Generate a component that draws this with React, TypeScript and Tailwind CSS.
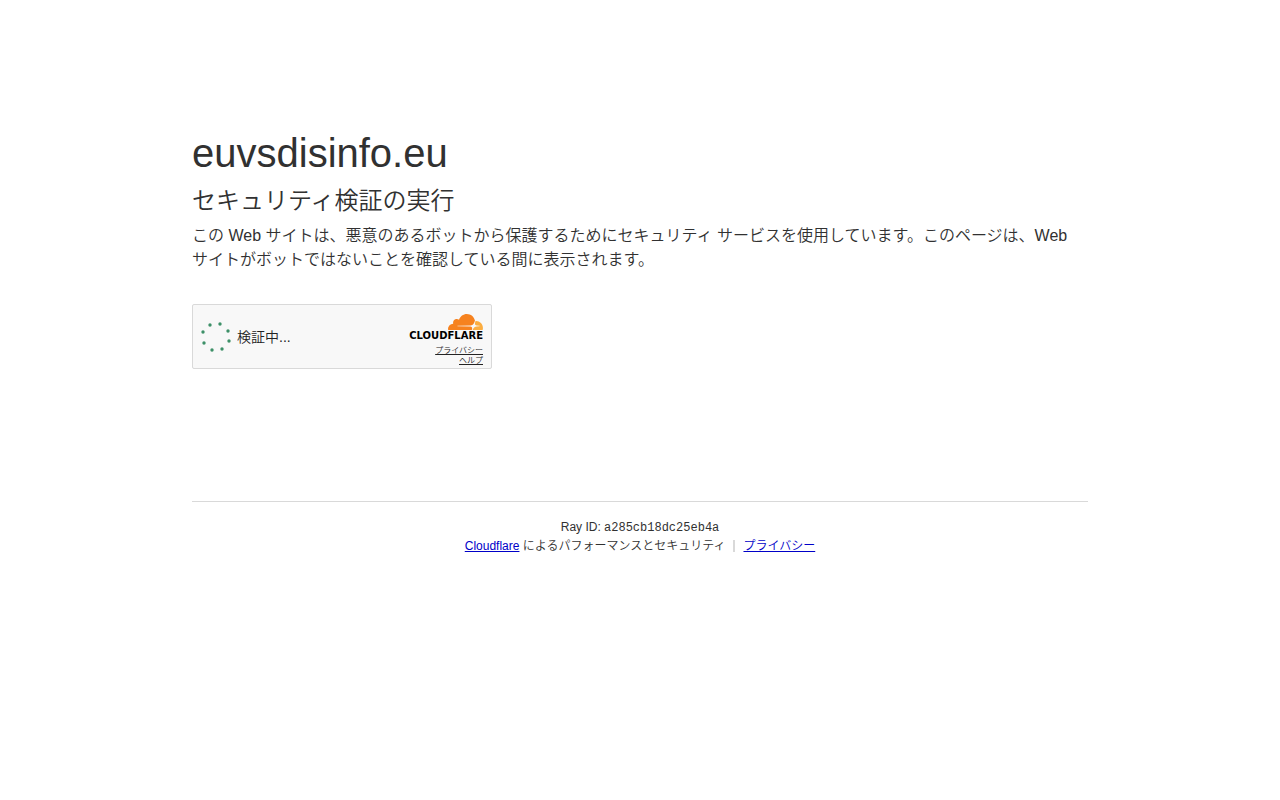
import React from "react";

// x/y of each spinner dot inside a 30x30 box
const DOTS = [
    [9, 3],
    [19, 2],
    [27, 9],
    [28, 19],
    [21, 27],
    [11, 28],
    [3, 21],
    [2, 10],
];

const Spinner = () => {
    return (
        <svg className="w-[30px] h-[30px] shrink-0" viewBox="0 0 30 30" aria-hidden="true">
            {DOTS.map(([x, y]) => (
                <circle key={`${x}-${y}`} cx={x} cy={y} r="1.7" fill="#3d9068" />
            ))}
        </svg>
    );
};

const CloudflareLogo = () => {
    return (
        <div className="flex flex-col items-end">
            <svg className="w-[35px] h-4" viewBox="38 0 35 16" aria-hidden="true">
                <path
                    fill="#F6821F"
                    d="M61.8848 15.7841L62.0632 15.1578C62.2758 14.4126 62.1967 13.7239 61.8401 13.2178C61.5118 12.7517 60.9649 12.4773 60.3007 12.4453L47.7201 12.2836C47.6811 12.2829 47.6428 12.2728 47.6083 12.2542C47.5738 12.2356 47.5442 12.209 47.5217 12.1766C47.4996 12.1431 47.4856 12.1049 47.4807 12.0649C47.4758 12.025 47.4801 11.9844 47.4933 11.9465C47.5149 11.8839 47.5541 11.8291 47.6061 11.7888C47.658 11.7486 47.7204 11.7247 47.7856 11.72L60.4827 11.5566C61.9889 11.4864 63.6196 10.2462 64.1905 8.73372L64.9146 6.81361C64.9443 6.73242 64.951 6.64444 64.9341 6.55957C64.112 2.80652 60.8115 0 56.8652 0C53.2293 0 50.1421 2.38158 49.0347 5.69186C48.2864 5.12186 47.3535 4.85982 46.4228 4.95823C44.6785 5.13401 43.276 6.55928 43.1034 8.32979C43.059 8.77189 43.0915 9.21845 43.1992 9.64918C40.3497 9.73347 38.0645 12.1027 38.0645 15.0151C38.0649 15.2751 38.0838 15.5347 38.1212 15.7919C38.1294 15.8513 38.1584 15.9057 38.2029 15.9452C38.2474 15.9848 38.3044 16.0067 38.3635 16.0071L61.5894 16.0099C61.6616 16.0088 61.7252 15.9862 61.7772 15.9455C61.8293 15.9049 61.867 15.8483 61.8848 15.7841Z"
                />
                <path
                    fill="#FBAD41"
                    d="M66.0758 6.95285C65.9592 6.95285 65.843 6.95582 65.7274 6.96177C65.7087 6.96312 65.6904 6.96719 65.6729 6.97385C65.6426 6.98437 65.6152 7.00219 65.5931 7.02579C65.5711 7.04939 65.555 7.07806 65.5462 7.10936L65.0515 8.84333C64.8389 9.58847 64.918 10.2766 65.2749 10.7827C65.6029 11.2494 66.1498 11.5233 66.814 11.5552L69.4959 11.7186C69.5336 11.7199 69.5705 11.73 69.6037 11.7483C69.6369 11.7666 69.6654 11.7925 69.687 11.8239C69.7092 11.8576 69.7234 11.896 69.7283 11.9363C69.7332 11.9765 69.7288 12.0173 69.7153 12.0555C69.6937 12.118 69.6546 12.1727 69.6028 12.2129C69.5509 12.2531 69.4887 12.2771 69.4236 12.2819L66.6371 12.4453C65.1241 12.5161 63.4937 13.7558 62.9233 15.2682L62.722 15.8022C62.7136 15.8245 62.7105 15.8486 62.713 15.8724C62.7155 15.8961 62.7236 15.9189 62.7365 15.9389C62.7494 15.9589 62.7668 15.9755 62.7871 15.9874C62.8074 15.9992 62.8302 16.006 62.8535 16.0072H72.4475C72.5029 16.0076 72.5569 15.9896 72.6012 15.9558C72.6455 15.9221 72.6778 15.8745 72.6929 15.8204C72.8617 15.2118 72.947 14.5823 72.9463 13.95C72.9459 10.0851 69.8684 6.95285 66.0758 6.95285Z"
                />
            </svg>
            <span className="font-['DejaVu_Sans',sans-serif] font-bold text-[10px] leading-3 text-black">CLOUDFLARE</span>
        </div>
    );
};

const Widget = () => {
    return (
        <div className="mt-8 flex w-full max-w-[300px] h-[65px] items-center justify-between rounded-xs border border-[#d9d9d9] bg-[#f8f8f8] px-2">
            <div className="flex items-center gap-[6px] text-sm text-[#232323]" role="status">
                <Spinner />
                <span>検証中...</span>
            </div>
            <div className="flex flex-col items-end pt-[6px]">
                <CloudflareLogo />
                <div className="mt-1 flex flex-col items-end text-[8px] leading-[10px] text-[#232323]">
                    <a href="#privacy" className="underline">プライバシー</a>
                    <a href="#help" className="underline">ヘルプ</a>
                </div>
            </div>
        </div>
    );
};

export default function App() {
    return (
        <div className="min-h-screen bg-white font-['Liberation_Sans','Noto_Sans_CJK_JP',sans-serif] font-[350] text-[#313131]" lang="ja">
            <main className="mx-auto w-full max-w-[960px] px-8 pt-32">
                <h1 className="text-[40px] leading-[50px]">euvsdisinfo.eu</h1>
                <h2 className="mt-1 text-2xl leading-[38px]">セキュリティ検証の実行</h2>
                <p className="mt-1 text-base leading-6">
                    この Web サイトは、悪意のあるボットから保護するためにセキュリティ サービスを使用しています。このページは、Web
                    <br />
                    サイトがボットではないことを確認している間に表示されます。
                </p>
                <Widget />
            </main>
            <footer className="mx-auto mt-[132px] w-full max-w-[960px] px-8">
                <div className="border-t border-[#d9d9d9] pt-4 text-center text-xs leading-[18px]">
                    <div>
                        Ray ID: <code className="font-['Liberation_Mono',monospace]">a285cb18dc25eb4a</code>
                    </div>
                    <div className="flex items-center justify-center">
                        <span>
                            <a href="#cloudflare" className="text-[#0000c8] underline">Cloudflare</a> によるパフォーマンスとセキュリティ
                        </span>
                        <span className="mx-2 h-3 border-l-2 border-[#d9d9d9]" />
                        <a href="#privacy" className="text-[#0000c8] underline">プライバシー</a>
                    </div>
                </div>
            </footer>
        </div>
    );
}
